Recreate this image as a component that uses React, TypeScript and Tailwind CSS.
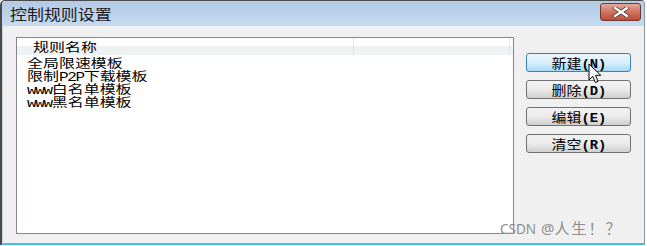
import React from "react";

const CJK = /([\u3000-\u9fff\uff00-\uffef]+)/;

function Mixed({ text, cjk, ascii }: { text: string; cjk: string; ascii: string }) {
  const parts = text.split(CJK).filter((p) => p.length > 0);
  return (
    <>
      {parts.map((p, i) =>
        CJK.test(p) ? (
          <span key={i} className={cjk}>
            {p}
          </span>
        ) : (
          <span key={i} className={ascii}>
            {p}
          </span>
        )
      )}
    </>
  );
}

const rowCjk = "leading-[13px] font-['Noto_Sans_CJK_SC',sans-serif] text-[12px]";
const rowAscii = "leading-[13px] font-['Liberation_Mono','Noto_Sans_CJK_SC',monospace] text-[12px] tracking-[-1px]";

function Btn({ label, hot }: { label: string; hot?: boolean }) {
  return (
    <div
      className={
        "w-[105px] h-[19px] rounded-[3px] border flex items-center justify-center text-black leading-none " +
        (hot
          ? "border-[#3c7fb1] bg-gradient-to-b from-[#eaf6fd] via-[#d9f0fc] to-[#a7d9f5]"
          : "border-[#707070] bg-gradient-to-b from-[#f2f2f2] via-[#ebebeb] to-[#cfcfcf]")
      }
    >
      <span className="flex items-baseline h-[15px] scale-x-[1.15] whitespace-nowrap pl-[1px]">
        <Mixed
          text={label}
          cjk="leading-[15px] font-['Noto_Sans_CJK_SC',sans-serif] text-[13px]"
          ascii="leading-[15px] font-['Liberation_Mono','Noto_Sans_CJK_SC',monospace] text-[12px] font-semibold"
        />
      </span>
    </div>
  );
}

export default function App() {
  const rows = ["全局限速模板", "限制P2P下载模板", "www白名单模板", "www黑名单模板"];
  return (
    <div className="w-[647px] h-[246px] bg-white relative overflow-hidden">
      <div className="w-[645px] h-[245px] flex flex-col border-l-2 border-t border-[#4a4a4a] border-r border-r-[#8a97a6] rounded-tl-[5px] rounded-tr-[4px] overflow-hidden">
        {/* Title bar */}
        <div className="h-[25px] flex items-center justify-between pl-[8px] pr-[3px] bg-gradient-to-b from-[#b3cbe5] via-[#bad1ea] to-[#c8dcf0]">
          <span className="inline-block origin-left scale-x-[1.13] font-['Noto_Sans_CJK_SC',sans-serif] text-[15px] text-[#1b1b1b] leading-none">
            控制规则设置
          </span>
          <div className="w-[41px] h-[18px] mt-[-4px] rounded-[3px] border border-[#6d3a35] bg-gradient-to-b from-[#e6a89c] via-[#d0725f] to-[#c04a36] flex items-center justify-center">
            <svg width="18" height="10" viewBox="0 0 18 10">
              <path d="M3 1 L15 9 M15 1 L3 9" stroke="#5a4a48" strokeWidth="4" strokeLinecap="square" />
              <path d="M3 1 L15 9 M15 1 L3 9" stroke="#ffffff" strokeWidth="2.2" strokeLinecap="square" />
            </svg>
          </div>
        </div>
        {/* Body */}
        <div className="flex-1 bg-[#f0f0f0] border-l border-[#c9d4df] border-b-2 border-b-[#38c4e2] flex pl-[13px] pt-[11px] gap-[12px]">
          <div className="w-[498px] h-[197px] border border-[#828790] bg-white flex flex-col">
            <div className="h-[17px] flex bg-gradient-to-b from-white from-50% to-[#f0f1f3] to-50%">
              <div className="w-[337px] pl-[16px] flex items-center border-r border-[#e1e3e6] text-black leading-none">
                <span className={"inline-block origin-left scale-x-[1.33] " + rowCjk}>规则名称</span>
              </div>
              <div className="w-[156px] border-r border-[#e1e3e6]" />
            </div>
            <div className="flex flex-col pl-[10px] pt-[1px] text-black">
              {rows.map((r) => (
                <div key={r} className="h-[13px] flex items-baseline whitespace-nowrap origin-left scale-x-[1.33]">
                  <Mixed text={r} cjk={rowCjk} ascii={rowAscii} />
                </div>
              ))}
            </div>
          </div>
          <div className="flex flex-col gap-[8px] pt-[16px]">
            <Btn label="新建(N)" hot />
            <Btn label="删除(D)" />
            <Btn label="编辑(E)" />
            <Btn label="清空(R)" />
          </div>
        </div>
      </div>
      {/* cursor */}
      <svg className="absolute left-[588px] top-[63px]" width="15" height="22" viewBox="0 0 15 22">
        <path
          d="M1 1 L1 17 L4.8 13.3 L7.4 19.5 L10 18.4 L7.5 12.3 L12.8 12.3 Z"
          fill="#ffffff"
          stroke="#000000"
          strokeWidth="1"
        />
      </svg>
      {/* watermark */}
      <div className="absolute left-[500px] top-[220px] font-['Noto_Sans',sans-serif] text-[15px] leading-[16px] text-[#8e8e8e] whitespace-nowrap">
        <span className="inline-block scale-x-[0.9] origin-left">CSDN</span>
        <span className="ml-[-3px]"> @</span>
        <span className="font-['Noto_Sans_CJK_SC',sans-serif] tracking-[2px]">人生！？</span>
      </div>
    </div>
  );
}
